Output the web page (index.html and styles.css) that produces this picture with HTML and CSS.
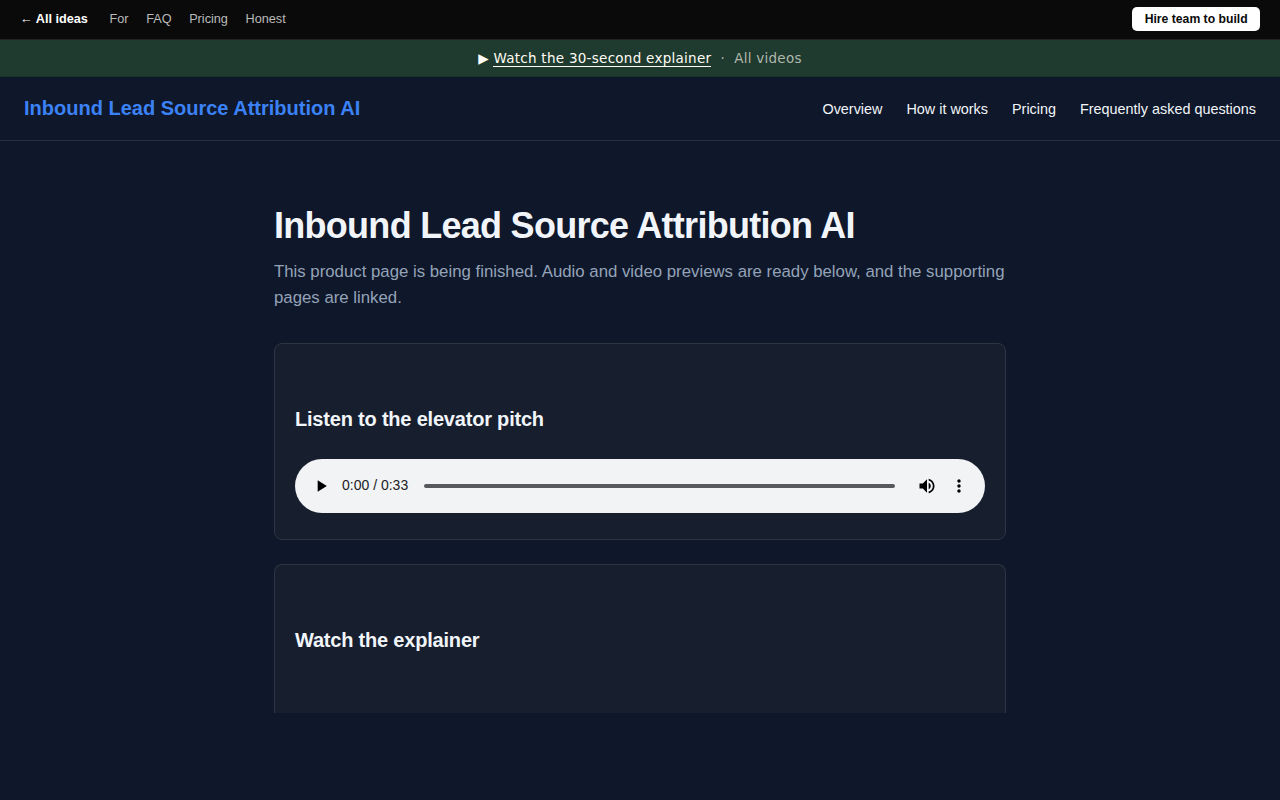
FILE: index.html
```html
<!DOCTYPE html>
<html lang="en">
<head>
  <meta charset="UTF-8">
  <meta name="viewport" content="width=device-width, initial-scale=1">
  <title>Inbound Lead Source Attribution AI</title>
  <link rel="stylesheet" href="styles.css">
</head>
<body>

  <div class="topbar">
    <div class="topbar-links">
      <a href="#" class="back">← All ideas</a>
      <a href="#">For</a>
      <a href="#">FAQ</a>
      <a href="#">Pricing</a>
      <a href="#">Honest</a>
    </div>
    <a href="#" class="hire">Hire team to build</a>
  </div>

  <div class="video-strip">
    ▶ <a href="#" class="watch">Watch the 30-second explainer</a>
    <span class="dot">&nbsp;·&nbsp;</span>
    <a href="#" class="all">All videos</a>
  </div>

  <header class="site-header">
    <a href="#" class="brand">Inbound Lead Source Attribution AI</a>
    <nav>
      <a href="#">Overview</a>
      <a href="#">How it works</a>
      <a href="#">Pricing</a>
      <a href="#">Frequently asked questions</a>
    </nav>
  </header>

  <main>
    <h1>Inbound Lead Source Attribution AI</h1>
    <p class="lead">This product page is being finished. Audio and video previews are ready below, and the supporting pages are linked.</p>

    <section class="card">
      <h2>Listen to the elevator pitch</h2>
      <div class="player">
        <svg class="play" width="20" height="20" viewBox="0 0 24 24"><path d="M8 5v14l11-7z"/></svg>
        <span class="time">0:00 / 0:33</span>
        <div class="track"></div>
        <svg class="volume" width="20" height="20" viewBox="0 0 24 24"><path d="M3 9v6h4l5 5V4L7 9H3zm13.5 3c0-1.77-1.02-3.29-2.5-4.03v8.05c1.48-.73 2.5-2.25 2.5-4.02zM14 3.23v2.06c2.89.86 5 3.54 5 6.71s-2.11 5.85-5 6.71v2.06c4.01-.91 7-4.49 7-8.77s-2.99-7.86-7-8.77z"/></svg>
        <svg class="more" width="20" height="20" viewBox="0 0 24 24"><path d="M12 8c1.1 0 2-.9 2-2s-.9-2-2-2-2 .9-2 2 .9 2 2 2zm0 2c-1.1 0-2 .9-2 2s.9 2 2 2 2-.9 2-2-.9-2-2-2zm0 6c-1.1 0-2 .9-2 2s.9 2 2 2 2-.9 2-2-.9-2-2-2z"/></svg>
      </div>
    </section>

    <section class="card card-cut">
      <h2>Watch the explainer</h2>
    </section>
  </main>

</body>
</html>
```

FILE: styles.css
```css
* {
  box-sizing: border-box;
}
body {
  margin: 0;
  height: 800px;
  overflow: hidden;
  background: #0f172a;
  color: #f1f5f9;
  font-family: "Liberation Sans", Arial, sans-serif;
}
a {
  color: inherit;
  text-decoration: none;
}
.topbar {
  display: flex;
  justify-content: space-between;
  align-items: center;
  height: 40px;
  padding: 0 20px 2px;
  background: #0a0a0a;
  border-bottom: 1px solid #222;
  font-size: 12.7px;
}
.topbar-links {
  display: flex;
  align-items: baseline;
  gap: 17.6px;
  color: #bbb;
}
.topbar-links .back {
  color: #fff;
  font-weight: 700;
  margin-right: 4px;
}
.hire {
  padding: 5px 12.4px;
  border-radius: 5px;
  background: #fff;
  color: #0a0a0a;
  font-size: 12.2px;
  font-weight: 700;
  line-height: 14px;
}
.video-strip {
  height: 37px;
  background: #1f3a2e;
  border-bottom: 1px solid #1a3325;
  color: #fffdf5;
  font-family: "DejaVu Sans", sans-serif;
  font-size: 13.5px;
  line-height: 36px;
  letter-spacing: 0.02em;
  text-align: center;
}
.watch {
  border-bottom: 1px solid #fffdf5;
}
.dot,
.all {
  color: #b0b8ad;
}
.site-header {
  display: flex;
  justify-content: space-between;
  align-items: center;
  height: 64px;
  padding: 0 24px;
  border-bottom: 1px solid #28313f;
}
.brand {
  color: #3b82f6;
  font-size: 20px;
  font-weight: 700;
}
nav {
  display: flex;
  gap: 24px;
  font-size: 14.4px;
}
main {
  width: 732px;
  margin: 0 auto;
  padding-top: 64px;
}
h1 {
  margin: 0 0 12px;
  font-size: 36px;
  line-height: 42px;
  letter-spacing: -0.72px;
}
.lead {
  margin: 0 0 32px;
  color: #94a3b8;
  font-size: 16.8px;
  line-height: 26px;
}
.card {
  height: 197px;
  margin-bottom: 24px;
  padding: 64px 20px 0;
  background: #171e2e;
  border: 1px solid #2b3642;
  border-radius: 8px;
}
.card-cut {
  height: 149px;
  border-bottom: 0;
  border-radius: 8px 8px 0 0;
}
h2 {
  margin: 0 0 28px;
  font-size: 20px;
  line-height: 23px;
  letter-spacing: -0.2px;
}
.player {
  display: flex;
  align-items: center;
  height: 54px;
  padding: 0 16px;
  border-radius: 27px;
  background: #f1f3f4;
  color: #202124;
}
.player svg {
  fill: #000;
}
.time {
  margin: 0 16px 0 11px;
  padding-bottom: 2px;
  font-size: 14px;
}
.track {
  flex: 1;
  height: 4px;
  border-radius: 2px;
  background: #56585b;
}
.volume {
  margin: 0 12px 0 22px;
}
```
